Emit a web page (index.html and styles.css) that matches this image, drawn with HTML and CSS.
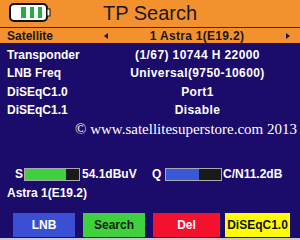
FILE: index.html
```html
<!DOCTYPE html>
<html>
<head>
<meta charset="utf-8">
<link rel="stylesheet" href="styles.css">
</head>
<body>
<div class="screen">
  <header class="title-bar">
    <div class="battery">
      <svg width="42" height="19" viewBox="0 0 42 19">
        <rect x="1" y="1" width="37" height="17" rx="4" ry="4" fill="#ffffff" stroke="#111111" stroke-width="2"/>
        <rect x="38" y="6" width="3" height="7" fill="#ffffff" stroke="#111111" stroke-width="1"/>
        <rect x="12" y="4" width="5" height="11" fill="#22ad48"/>
        <rect x="21" y="4" width="4" height="11" fill="#22ad48"/>
        <rect x="29" y="4" width="4" height="11" fill="#22ad48"/>
      </svg>
    </div>
    <h1 class="title">TP Search</h1>
    <div></div>
  </header>
  <div class="sat-row">
    <span class="sat-label">Satellite</span>
    <span class="arrow arrow-left"></span>
    <span class="sat-value">1 Astra 1(E19.2)</span>
    <span class="arrow arrow-right"></span>
  </div>
  <main class="body">
    <div class="params">
      <div class="label">Transponder</div><div class="value">(1/67) 10744 H 22000</div>
      <div class="label">LNB Freq</div><div class="value">Universal(9750-10600)</div>
      <div class="label">DiSEqC1.0</div><div class="value">Port1</div>
      <div class="label">DiSEqC1.1</div><div class="value">Disable</div>
    </div>
    <div class="watermark">© www.satellitesuperstore.com 2013</div>
    <div class="signal">
      <div class="meter meter-s">
        <span class="m-label">S</span>
        <span class="bar"><span class="fill fill-green" style="width:76%"></span></span>
        <span class="m-value">54.1dBuV</span>
      </div>
      <div class="meter meter-q">
        <span class="m-label">Q</span>
        <span class="bar"><span class="fill fill-blue" style="width:60%"></span></span>
        <span class="m-value">C/N11.2dB</span>
      </div>
    </div>
    <div class="sat-name">Astra 1(E19.2)</div>
    <div class="buttons">
      <div class="btn btn-blue">LNB</div>
      <div class="btn btn-green">Search</div>
      <div class="btn btn-red">Del</div>
      <div class="btn btn-yellow">DiSEqC1.0</div>
    </div>
  </main>
</div>
</body>
</html>
```
FILE: styles.css
```css
html, body {
  margin: 0;
  padding: 0;
  background: #1b0b6a;
}
.screen {
  width: 300px;
  height: 240px;
  display: flex;
  flex-direction: column;
  font-family: "Liberation Sans", Arial, sans-serif;
  font-weight: bold;
  font-size: 12px;
  box-sizing: border-box;
  border-bottom: 2px solid #c9c9d2;
  overflow: hidden;
}
.title-bar {
  height: 27px;
  background: #f4912f;
  border-bottom: 1px solid #3d2410;
  display: grid;
  grid-template-columns: 1fr auto 1fr;
  align-items: start;
}
.battery {
  padding: 3px 0 0 9px;
  height: 19px;
}
.battery svg { display: block; }
.title {
  margin: 0;
  font-weight: normal;
  font-size: 20px;
  line-height: 27px;
  color: #1a1612;
}
.sat-row {
  height: 15px;
  line-height: 15px;
  background: #f4912f;
  color: #1a1612;
  display: flex;
  align-items: center;
  padding-top: 1px;
  box-sizing: border-box;
}
.sat-label {
  width: 97px;
  padding-left: 7px;
  box-sizing: border-box;
}
.sat-value {
  flex: 1;
  text-align: center;
  letter-spacing: 0.3px;
}
.arrow {
  width: 0;
  height: 0;
  border-top: 3px solid transparent;
  border-bottom: 3px solid transparent;
  margin: 0 7px;
}
.arrow-left {
  border-right: 4px solid #1a1612;
}
.arrow-right {
  border-left: 4px solid #1a1612;
  margin-right: 10px;
}
.body {
  flex: 1;
  background: #1b0b6a;
  color: #ffffff;
  display: flex;
  flex-direction: column;
}
.params {
  display: grid;
  grid-template-columns: 95px 1fr;
  grid-auto-rows: 18.3px;
  line-height: 18px;
  padding-top: 3px;
}
.label { padding-left: 7px; }
.value { text-align: center; white-space: nowrap; letter-spacing: 0.4px; }
.watermark {
  margin-top: 1px;
  padding-left: 75px;
  font-family: "Liberation Serif", "Times New Roman", serif;
  font-weight: normal;
  font-size: 15px;
  line-height: 18px;
  white-space: nowrap;
  color: #ffffff;
}
.signal {
  margin-top: 30px;
  height: 13px;
  display: flex;
  padding-left: 15px;
}
.meter {
  display: flex;
  align-items: center;
  height: 13px;
  line-height: 13px;
}
.meter-s { width: 137px; }
.m-label { display: inline-block; }
.meter-s .m-label { width: 9px; }
.meter-q .m-label { width: 13px; }
.bar {
  display: block;
  height: 13px;
  box-sizing: border-box;
  border: 1px solid #a9a9b4;
  background: #1a1a1a;
  margin-right: 2px;
}
.meter-s .bar { width: 56px; }
.meter-q .bar { width: 57px; margin-right: 1px; }
.fill { display: block; height: 100%; }
.fill-green { background: #3fd040; }
.fill-blue { background: #3a58d6; }
.sat-name {
  margin-top: 5px;
  padding-left: 7px;
  line-height: 14px;
}
.buttons {
  margin-top: 13px;
  display: grid;
  grid-template-columns: 62px 62px 67px 62px;
  column-gap: 8px;
  padding-left: 13px;
}
.buttons .btn:nth-child(4) { margin-left: -3px; }
.btn {
  height: 24px;
  line-height: 24px;
  text-align: center;
  white-space: nowrap;
}
.btn-blue { background: #3b4fd4; color: #ffffff; }
.btn-green { background: #3fd23e; color: #14210f; }
.btn-red { background: #f4112e; color: #ffffff; }
.btn-yellow { background: #fffd00; color: #111111; }
```
